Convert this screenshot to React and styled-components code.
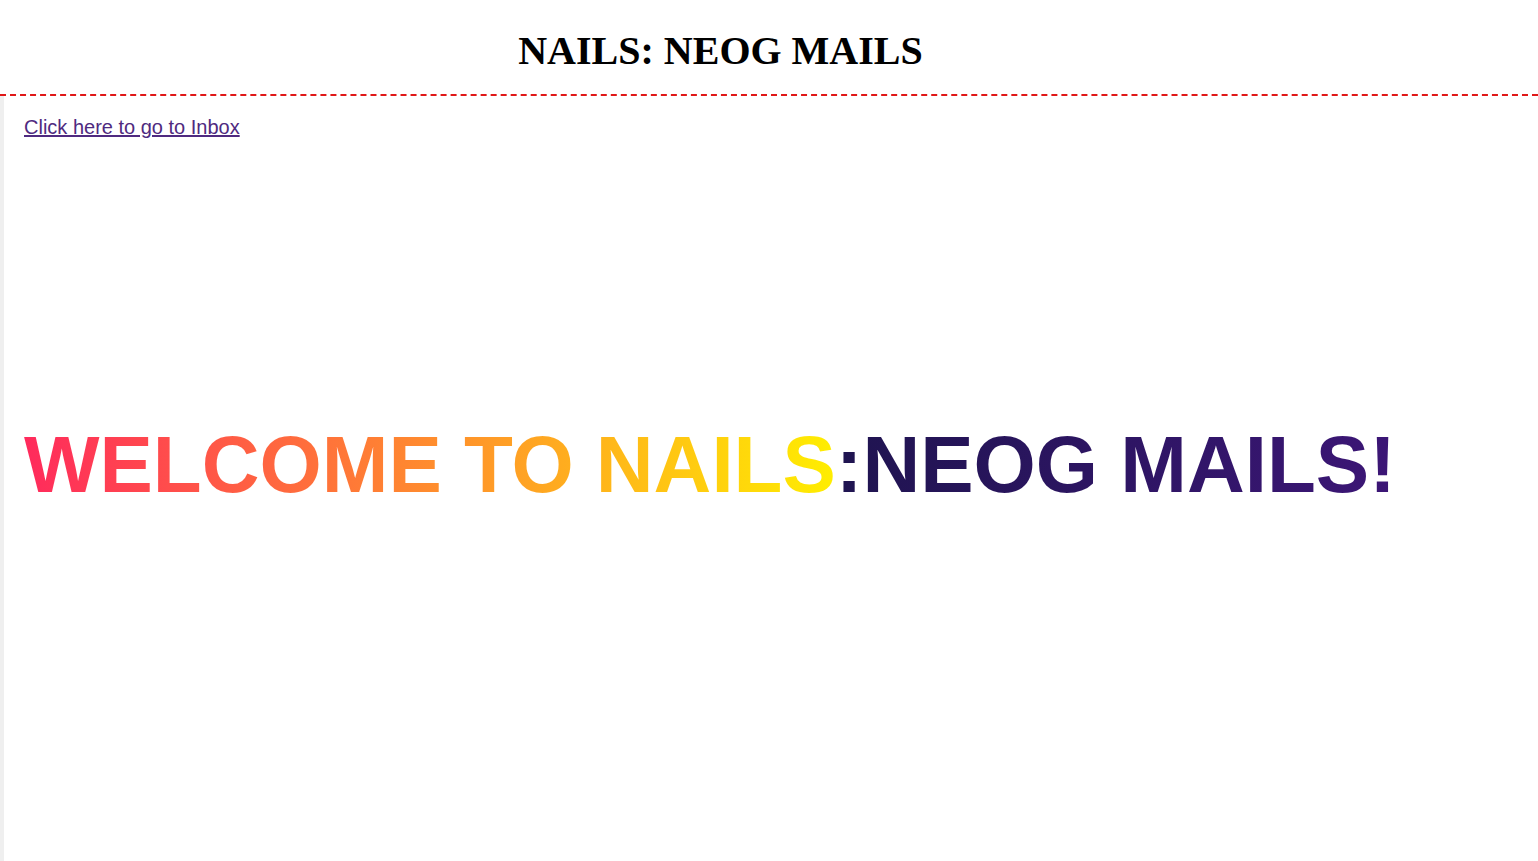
import React from "react";
import styled, { createGlobalStyle } from "styled-components";

const Global = createGlobalStyle`
  html, body { margin: 0; padding: 0; background: #fff; }
  body { font-family: "Liberation Sans", Arial, sans-serif; }
`;

const Page = styled.div`
  display: flex;
  flex-direction: column;
  min-height: 861px;
`;

const Header = styled.header`
  padding: 28px 97px 20px 0;
  border-bottom: 2px dashed #e01818;
  text-align: center;
`;

const Brand = styled.h1`
  margin: 0;
  font-family: "Liberation Serif", "Times New Roman", serif;
  font-weight: 700;
  font-size: 40px;
  line-height: 46px;
  color: #000;
`;

const Main = styled.main`
  flex: 1;
  border-left: 4px solid #efefef;
  padding: 20px 20px 0;
`;

const InboxLink = styled.a`
  font-size: 20px;
  line-height: 23px;
  color: #4f2a80;
  text-decoration: underline;
`;

const Title = styled.h2`
  margin: 280px 0 0;
  font-size: 80px;
  line-height: 92px;
  font-weight: 700;
  white-space: nowrap;
`;

const Gradient = styled.span`
  background: linear-gradient(90deg, ${(p) => p.$from}, ${(p) => p.$to});
  -webkit-background-clip: text;
  background-clip: text;
  color: transparent;
`;

export default function App() {
  return (
    <>
      <Global />
      <Page>
        <Header>
          <Brand>NAILS: NEOG MAILS</Brand>
        </Header>
        <Main>
          <div>
            <InboxLink href="#inbox">Click here to go to Inbox</InboxLink>
          </div>
          <Title>
            <Gradient $from="#ff2a5c" $to="#ffee00">WELCOME TO NAILS</Gradient>
            <Gradient $from="#1f1450" $to="#3c1676">:NEOG MAILS!</Gradient>
          </Title>
        </Main>
      </Page>
    </>
  );
}
